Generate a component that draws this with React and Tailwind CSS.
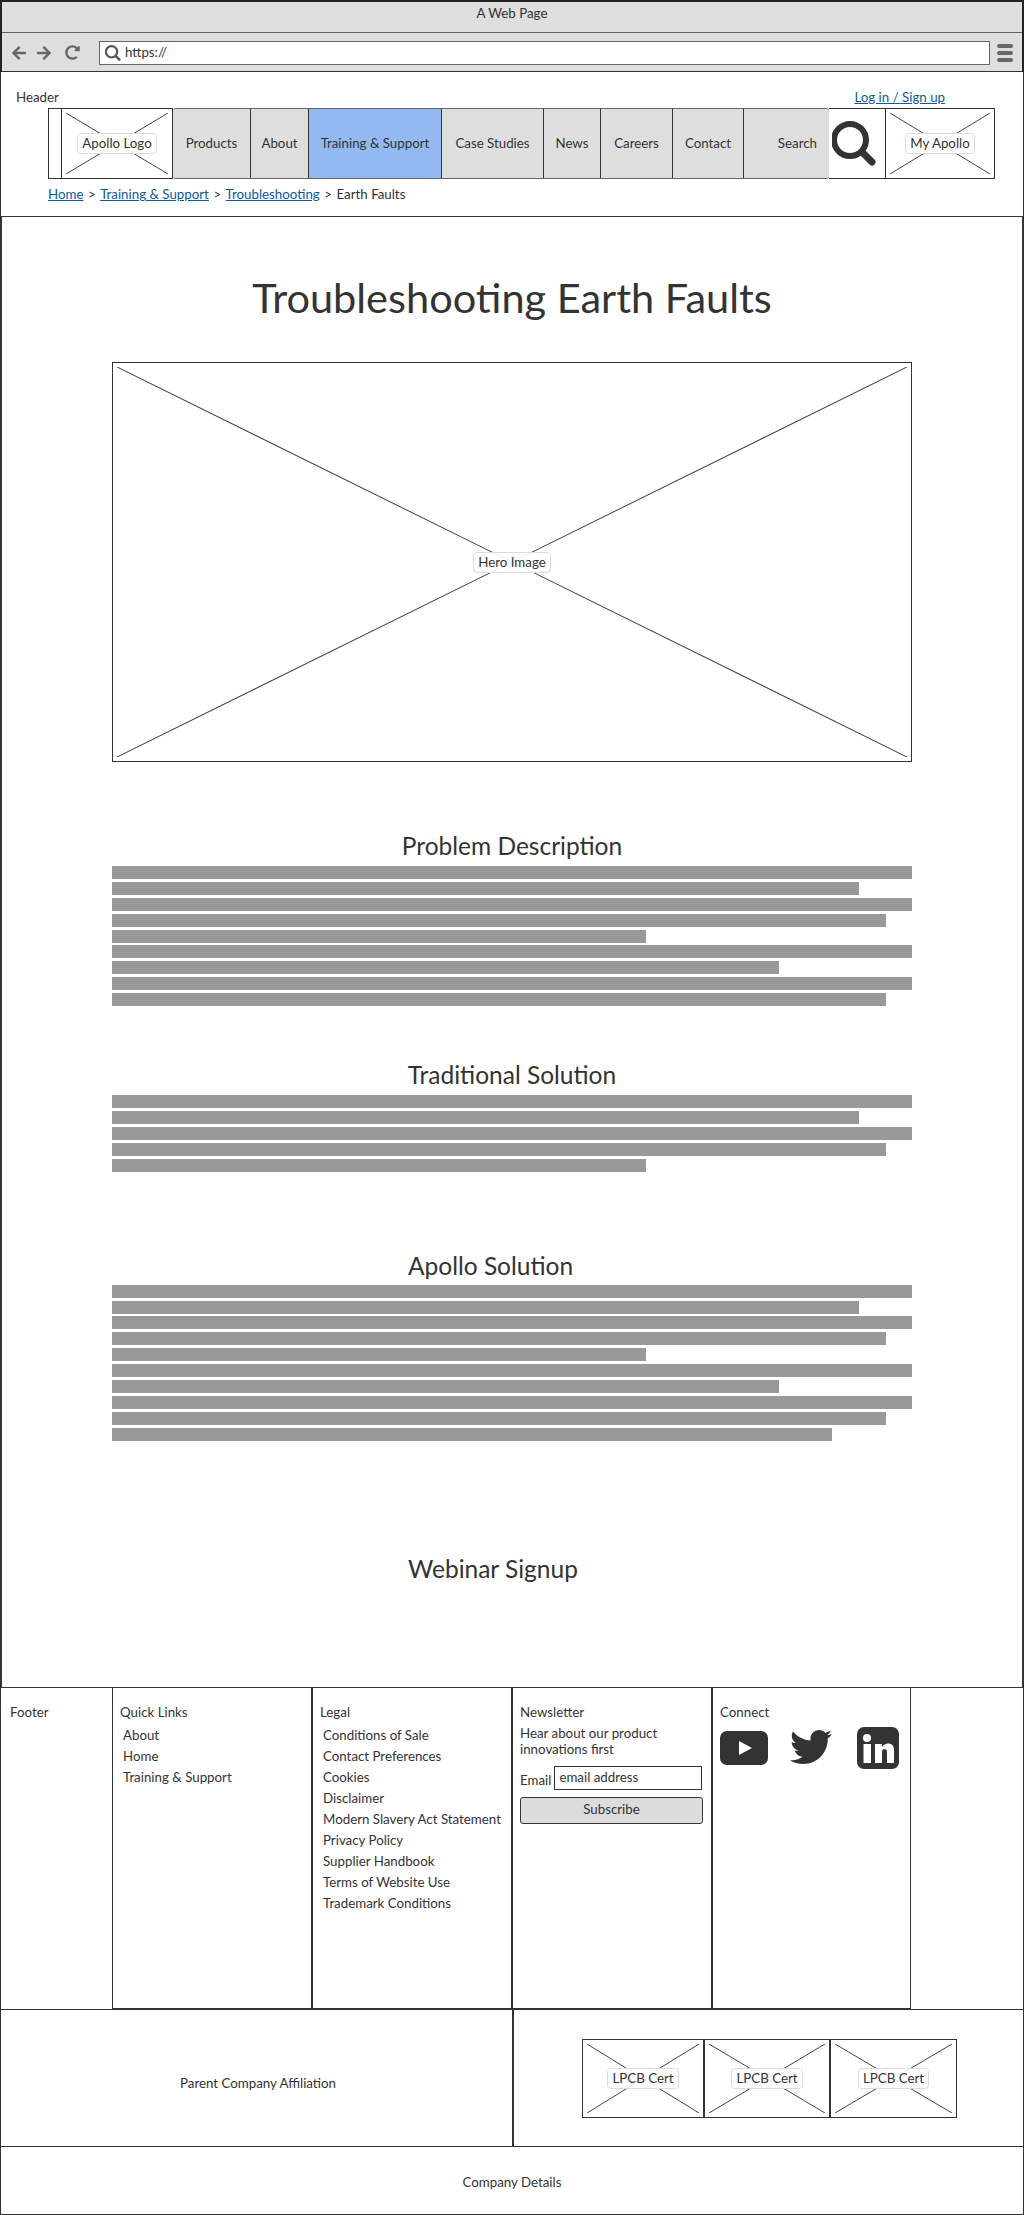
import React from 'react';
import { FaArrowLeft, FaArrowRight, FaRedoAlt, FaTwitter } from 'react-icons/fa';

const navItems = [
  { label: 'Products', width: 'w-[78px]' },
  { label: 'About', width: 'w-[58px]' },
  { label: 'Training & Support', width: 'w-[133px]', active: true },
  { label: 'Case Studies', width: 'w-[102px]' },
  { label: 'News', width: 'w-[57px]' },
  { label: 'Careers', width: 'w-[72px]' },
  { label: 'Contact', width: 'w-[71px]' },
];

const legalLinks = [
  'Conditions of Sale',
  'Contact Preferences',
  'Cookies',
  'Disclaimer',
  'Modern Slavery Act Statement',
  'Privacy Policy',
  'Supplier Handbook',
  'Terms of Website Use',
  'Trademark Conditions',
];

const problemBars = [800, 747, 800, 774, 534, 800, 667, 800, 774];
const traditionalBars = [800, 747, 800, 774, 534];
const apolloBars = [800, 747, 800, 774, 534, 800, 667, 800, 774, 720];

const Cross = () => (
  <svg className="absolute inset-[4px] h-[calc(100%-8px)] w-[calc(100%-8px)]" viewBox="0 0 100 100" preserveAspectRatio="none" fill="none">
    <path d="M0 0L100 100M100 0L0 100" stroke="#444" strokeWidth="1" vectorEffect="non-scaling-stroke" />
  </svg>
);

const Placeholder = ({ label, className }) => (
  <div className={`relative flex items-center justify-center border border-[#333] bg-white ${className}`}>
    <Cross />
    <span className="relative rounded-[4px] border border-[#ddd] bg-white/90 px-[4px] text-[13.3px] leading-[19px] text-[#333]">{label}</span>
  </div>
);

const SearchGlyph = ({ className, stroke }) => (
  <svg className={className} viewBox="0 0 44 45" fill="none" stroke={stroke} strokeLinecap="round">
    <circle cx="18" cy="19" r="16" strokeWidth="6" />
    <path d="M30 31L40 41" strokeWidth="7" />
  </svg>
);

const Bars = ({ widths }) => (
  <div className="flex flex-col gap-[2.9px]">
    {widths.map((w, i) => (
      <div key={i} className="h-[13px] bg-[#999]" style={{ width: w }} />
    ))}
  </div>
);

const SectionHeading = ({ className, children }) => (
  <h2 className={`text-[24.5px] leading-8 text-[#333] ${className}`}>{children}</h2>
);

const FooterColumn = ({ title, className, children }) => (
  <div className={`border-[#333] px-[7px] pt-[16px] ${className}`}>
    <div className="text-[13.3px] leading-[17px]">{title}</div>
    {children}
  </div>
);

const LinkList = ({ links }) => (
  <ul className="mt-[4px] pl-[3px]">
    {links.map((l) => (
      <li key={l} className="text-[13.3px] leading-[21px] whitespace-nowrap">{l}</li>
    ))}
  </ul>
);

const App = () => {
  return (
    <div className="relative h-[2215px] w-[1024px] overflow-hidden bg-white text-[#333] font-['Lato','Open_Sans',sans-serif]">
      {/* browser chrome */}
      <div className="border-x-2 border-t-2 border-[#222]">
        <div className="flex h-[31px] items-start justify-center border-b border-[#666] bg-[#dededd] pt-[2px] text-[13.3px] leading-[18px]">A Web Page</div>
        <div className="flex h-[39px] items-center border-b border-[#333] bg-[#dededd] pl-[9px] pr-[9px] pt-[1px]">
          <FaArrowLeft className="h-[16px] w-[16px] text-[#666]" />
          <FaArrowRight className="ml-[9px] h-[16px] w-[16px] text-[#666]" />
          <FaRedoAlt className="ml-[13px] h-[15px] w-[15px] text-[#666]" />
          <div className="ml-[19px] flex h-[24px] w-[891px] items-center border border-[#666] bg-white pl-[5px] text-[13.3px]">
            <SearchGlyph className="h-[16px] w-[16px]" stroke="#555" />
            <span className="ml-[4px]">https://</span>
          </div>
          <div className="ml-auto flex w-[16px] flex-col gap-[3px]">
            <div className="h-[4px] rounded-full bg-[#666]" />
            <div className="h-[4px] rounded-full bg-[#666]" />
            <div className="h-[4px] rounded-full bg-[#666]" />
          </div>
        </div>
      </div>

      {/* header */}
      <header className="h-[145px] border-x border-b border-[#333] pt-[17px]">
        <div className="flex h-[18px] items-center justify-between pl-[15px] pr-[78px] text-[13.3px]">
          <span>Header</span>
          <a className="text-[#0b5a9e] underline">Log in / Sign up</a>
        </div>
        <nav className="ml-[47px] mt-[1px] flex h-[71px]">
          <div className="w-[13px] border border-r-0 border-[#333]" />
          <Placeholder label="Apollo Logo" className="w-[112px]" />
          <div className="flex w-[656px] overflow-hidden rounded-[3px] border-y border-[#666] bg-[#dedede] text-[13.3px]">
            {navItems.map((item) => (
              <div key={item.label} className={`flex items-center justify-center border-r border-[#333] ${item.width} ${item.active ? 'bg-[#92b9f0]' : ''}`}>
                {item.label}
              </div>
            ))}
            <div className="flex flex-1 items-center justify-end pr-[12px]">Search</div>
          </div>
          <div className="flex w-[56px] items-center border-y border-[#333] pl-[3px]">
            <SearchGlyph className="h-[45px] w-[44px]" stroke="#333" />
          </div>
          <Placeholder label="My Apollo" className="w-[110px]" />
        </nav>
        <div className="ml-[47px] mt-[6px] flex items-center gap-[4.5px] text-[13.3px] leading-[18px]">
          <a className="text-[#0b5a9e] underline">Home</a>
          <span>&gt;</span>
          <a className="text-[#0b5a9e] underline">Training &amp; Support</a>
          <span>&gt;</span>
          <a className="text-[#0b5a9e] underline">Troubleshooting</a>
          <span>&gt;</span>
          <span>Earth Faults</span>
        </div>
      </header>

      {/* main */}
      <main className="flex h-[1471px] flex-col border-x-2 border-b border-[#333] pl-[110px]">
        <h1 className="mt-[56px] w-[800px] text-center text-[41.5px] leading-[48px]">Troubleshooting Earth Faults</h1>
        <Placeholder label="Hero Image" className="mt-[41px] h-[400px] w-[800px]" />
        <SectionHeading className="mt-[68px] w-[800px] text-center">Problem Description</SectionHeading>
        <div className="mt-[4px]"><Bars widths={problemBars} /></div>
        <SectionHeading className="mt-[53px] w-[800px] text-center">Traditional Solution</SectionHeading>
        <div className="mt-[4px]"><Bars widths={traditionalBars} /></div>
        <SectionHeading className="mt-[78px] pl-[296px]">Apollo Solution</SectionHeading>
        <div className="mt-[3px]"><Bars widths={apolloBars} /></div>
        <SectionHeading className="mt-[112px] pl-[296px]">Webinar Signup</SectionHeading>
      </main>

      {/* footer */}
      <footer className="text-[#333]">
        <div className="flex h-[322px] border-x border-[#333]">
          <div className="w-[111px] border-b border-[#333] pl-[9px] pt-[16px] text-[13.3px] leading-[17px]">Footer</div>
          <FooterColumn title="Quick Links" className="w-[199px] border-l border-b-2">
            <LinkList links={['About', 'Home', 'Training & Support']} />
          </FooterColumn>
          <FooterColumn title="Legal" className="w-[200px] border-l-2 border-b-2">
            <LinkList links={legalLinks} />
          </FooterColumn>
          <FooterColumn title="Newsletter" className="w-[200px] border-l-2 border-b-2">
            <p className="mt-[4px] text-[13.3px] leading-[16px]">Hear about our product innovations first</p>
            <div className="mt-[9px] flex items-end gap-[3px] text-[13.3px]">
              <span className="leading-[19px]">Email</span>
              <input
                readOnly
                value="email address"
                className="h-[24px] w-[148px] border border-[#333] px-[4px] pb-[3px] text-[13.3px] text-[#333]"
              />
            </div>
            <button className="mt-[7px] h-[27px] w-[183px] rounded-[3px] border border-[#333] bg-[#dcdcdc] pb-[2px] text-[13.3px]">Subscribe</button>
          </FooterColumn>
          <FooterColumn title="Connect" className="w-[200px] border-l-2 border-r border-b-2">
            <div className="flex items-start">
              <svg className="mt-[10px] h-[34px] w-[48px]" viewBox="0 0 48 34">
                <rect width="48" height="34" rx="7" fill="#333" />
                <path d="M19 10L32 17L19 24Z" fill="#fff" />
              </svg>
              <FaTwitter className="ml-[22px] mt-[5px] h-[42px] w-[42px] text-[#333]" />
              <svg className="ml-[25px] mt-[6px] h-[42px] w-[42px]" viewBox="0 0 42 42">
                <rect width="42" height="42" rx="7" fill="#333" />
                <circle cx="10" cy="11" r="4" fill="#fff" />
                <rect x="6.5" y="17" width="7.5" height="19" fill="#fff" />
                <path d="M18 17H25V20C26.500 18 28.500 16.500 31 16.500C35 16.500 37 19 37 23.500V36H30V25C30 23 29 22 27.500 22C26 22 25 23 25 25V36H18Z" fill="#fff" />
              </svg>
            </div>
          </FooterColumn>
          <div className="flex-1 border-b border-[#333]" />
        </div>
        <div className="flex h-[137px]">
          <div className="flex w-[512px] items-center border-b border-l border-[#333] pt-[12px] pl-[179px] text-[13.3px]">Parent Company Affiliation</div>
          <div className="flex flex-1 items-center justify-center border-b border-l-2 border-r border-[#333] pl-[2px]">
            <Placeholder label="LPCB Cert" className="h-[79px] w-[122px]" />
            <Placeholder label="LPCB Cert" className="h-[79px] w-[126px]" />
            <Placeholder label="LPCB Cert" className="h-[79px] w-[127px]" />
          </div>
        </div>
        <div className="flex h-[68px] items-center justify-center border-x border-b border-[#333] pt-[4px] text-[13.3px]">Company Details</div>
      </footer>
    </div>
  );
};

export default App;
